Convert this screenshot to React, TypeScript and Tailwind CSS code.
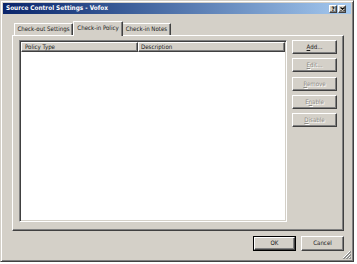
import React from "react";

const raised =
  "border border-t-white border-l-white border-r-[#404040] border-b-[#404040] shadow-[inset_-1px_-1px_#808080]";

function Btn({
  children,
  disabled,
  w = "w-[45px]",
}: {
  children: React.ReactNode;
  disabled?: boolean;
  w?: string;
}) {
  return (
    <div
      className={`h-[14px] ${w} shrink-0 flex items-center justify-center bg-[#d4d0c8] ${raised} text-[6.1px] leading-none ${
        disabled ? "text-[#8e8c87] [text-shadow:1px_1px_0_#ffffff]" : "text-[#1a1a1a]"
      }`}
    >
      {children}
    </div>
  );
}

export default function App() {
  return (
    <div className="w-[357px] h-[264px] bg-white font-['DejaVu_Sans_Condensed','Liberation_Sans',sans-serif] overflow-hidden">
      <div className="relative w-[354px] h-[262px] bg-[#d4d0c8] border border-t-[#d4d0c8] border-l-[#d4d0c8] border-r-[#404040] border-b-[#404040] shadow-[inset_1px_1px_#ffffff,inset_-1px_-1px_#808080] p-[2px] flex flex-col">
        {/* title bar */}
        <div className="h-[11px] shrink-0 flex items-center bg-gradient-to-r from-[#0a246a] to-[#a6caf0] pl-[3px] pr-[5px]">
          <span className="text-white font-bold text-[6.4px] leading-none">
            Source Control Settings - Vofox
          </span>
          <div className="ml-auto flex gap-[1px]">
            <div className={`w-[8px] h-[8px] bg-[#d4d0c8] ${raised} flex items-center justify-center text-[6px] font-bold leading-none text-black`}>
              ?
            </div>
            <div className={`w-[8px] h-[8px] bg-[#d4d0c8] ${raised} flex items-center justify-center`}>
              <svg width="5" height="4" viewBox="0 0 5 4">
                <path d="M0.5 0.5 L4.5 3.5 M4.5 0.5 L0.5 3.5" stroke="#000" strokeWidth="1.1" />
              </svg>
            </div>
          </div>
        </div>

        {/* body */}
        <div className="pl-[9px] pt-[7px] flex flex-col">
          {/* tabs */}
          <div className="flex items-end h-[14px] pl-[2px] relative z-10">
            <div className="h-[12px] w-[59px] border border-b-0 border-t-white border-l-white border-r-[#404040] shadow-[inset_-1px_0_#808080] rounded-t-[1px] flex items-center justify-center text-[6.1px] leading-none text-[#1a1a1a]">
              Check-out Settings
            </div>
            <div className="h-[15px] w-[50px] -mb-[1px] bg-[#d4d0c8] border border-b-0 border-t-white border-l-white border-r-[#404040] shadow-[inset_-1px_0_#808080] rounded-t-[1px] flex items-start pt-[3px] justify-center text-[6.1px] leading-none text-[#1a1a1a]">
              Check-in Policy
            </div>
            <div className="h-[12px] w-[48px] border border-b-0 border-t-white border-l-0 border-r-[#404040] shadow-[inset_-1px_0_#808080] rounded-t-[1px] flex items-center justify-center text-[6.1px] leading-none text-[#1a1a1a]">
              Check-in Notes
            </div>
          </div>

          {/* panel */}
          <div className={`w-[332px] h-[196px] bg-[#d4d0c8] ${raised} pl-[6px] pt-[4px] flex gap-[5px]`}>
            {/* list */}
            <div className="w-[268px] h-[182px] bg-white border border-t-[#808080] border-l-[#808080] border-r-white border-b-white shadow-[inset_1px_1px_#404040,inset_-1px_-1px_#d4d0c8] p-[1px] flex flex-col">
              <div className="h-[10px] flex shrink-0">
                <div className={`w-[117px] h-full bg-[#d4d0c8] ${raised} flex items-center pl-[3px] text-[6.1px] leading-none text-[#1a1a1a]`}>
                  Policy Type
                </div>
                <div className={`flex-1 h-full bg-[#d4d0c8] ${raised} flex items-center pl-[2px] text-[6.1px] leading-none text-[#1a1a1a]`}>
                  Description
                </div>
              </div>
              <div className="flex-1 bg-white" />
            </div>

            {/* buttons */}
            <div className="flex flex-col gap-[4.3px]">
              <Btn>
                <span>
                  <span className="underline">A</span>dd...
                </span>
              </Btn>
              <Btn disabled>
                <span>
                  <span className="underline">E</span>dit...
                </span>
              </Btn>
              <Btn disabled>
                <span>
                  <span className="underline">R</span>emove
                </span>
              </Btn>
              <Btn disabled>
                <span>
                  E<span className="underline">n</span>able
                </span>
              </Btn>
              <Btn disabled>
                <span>
                  <span className="underline">D</span>isable
                </span>
              </Btn>
            </div>
          </div>

          {/* bottom buttons */}
          <div className="w-[332px] flex justify-end gap-[5px] mt-[5px]">
            <div className="border border-black">
              <div className={`h-[13px] w-[41px] flex items-center justify-center bg-[#d4d0c8] ${raised} text-[6.1px] leading-none text-[#1a1a1a]`}>
                OK
              </div>
            </div>
            <div className={`h-[15px] w-[43px] flex items-center justify-center bg-[#d4d0c8] ${raised} text-[6.1px] leading-none text-[#1a1a1a]`}>
              Cancel
            </div>
          </div>
        </div>

        {/* resize grip */}
        <svg className="absolute right-[2px] bottom-[2px]" width="9" height="9" viewBox="0 0 9 9">
          <path d="M8 1 L1 8 M8 4 L4 8 M8 7 L7 8" stroke="#ffffff" strokeWidth="1" />
          <path d="M9 1 L1 9 M9 2 L2 9 M9 4 L4 9 M9 5 L5 9 M9 7 L7 9 M9 8 L8 9" stroke="#808080" strokeWidth="0.8" />
        </svg>
      </div>
    </div>
  );
}
